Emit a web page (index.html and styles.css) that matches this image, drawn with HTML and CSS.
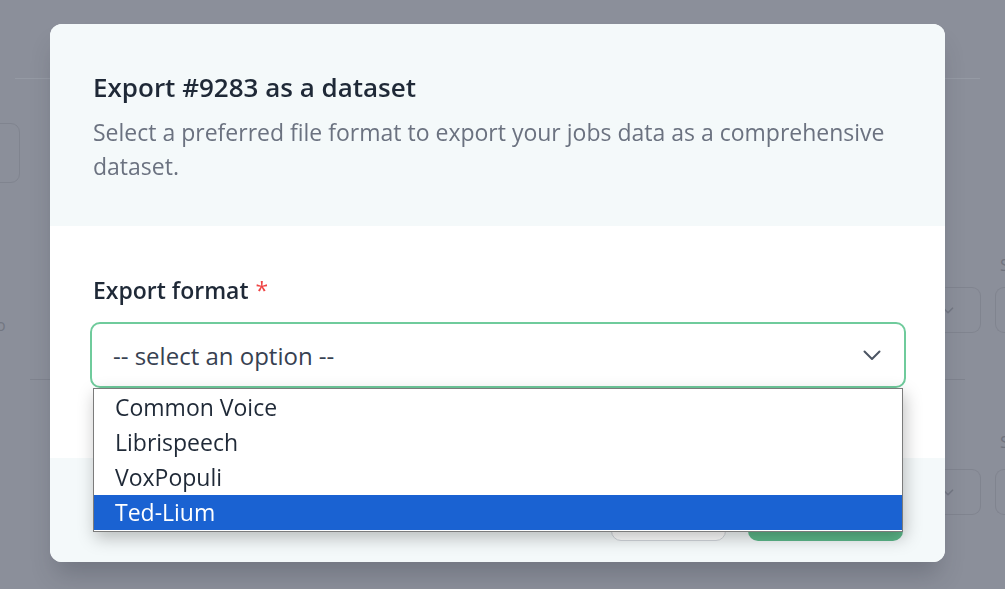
FILE: index.html
```html
<!DOCTYPE html>
<html lang="en">
<head>
<meta charset="utf-8">
<title>Export dataset</title>
<link rel="stylesheet" href="styles.css">
</head>
<body>
<div class="page">
  <div class="page-top"></div>
  <div class="page-row row-a">
    <div class="bg-box bg-box-left"></div>
  </div>
  <div class="page-row row-b">
    <span class="bg-dot">o</span>
    <div class="bg-field">
      <span class="bg-label">S</span>
      <div class="bg-controls">
        <div class="bg-select"><svg width="18" height="18" viewBox="0 0 20 20"><path d="M5 8l5 5 5-5" fill="none" stroke="#747884" stroke-width="1.8" stroke-linecap="round" stroke-linejoin="round"/></svg></div>
        <div class="bg-box bg-box-right"></div>
      </div>
    </div>
  </div>
  <div class="page-divider"></div>
  <div class="page-row row-c">
    <div class="bg-field">
      <span class="bg-label">S</span>
      <div class="bg-controls">
        <div class="bg-select"><svg width="18" height="18" viewBox="0 0 20 20"><path d="M5 8l5 5 5-5" fill="none" stroke="#747884" stroke-width="1.8" stroke-linecap="round" stroke-linejoin="round"/></svg></div>
        <div class="bg-box bg-box-right"></div>
      </div>
    </div>
  </div>
</div>

<div class="overlay">
  <div class="modal">
    <div class="modal-header">
      <h2 class="modal-title">Export #9283 as a dataset</h2>
      <p class="modal-desc">Select a preferred file format to export your jobs data as a comprehensive dataset.</p>
    </div>
    <div class="modal-body">
      <label class="field-label">Export format<span class="req">*</span></label>
      <div class="select-wrap">
        <div class="select">
          <span class="select-text">-- select an option --</span>
          <svg class="chevron" width="20" height="12" viewBox="0 0 20 12"><path d="M2.5 2.5l7.5 7.5 7.5-7.5" fill="none" stroke="#4b5563" stroke-width="2" stroke-linecap="round" stroke-linejoin="round"/></svg>
        </div>
        <ul class="dropdown">
          <li class="option">Common Voice</li>
          <li class="option">Librispeech</li>
          <li class="option">VoxPopuli</li>
          <li class="option selected">Ted-Lium</li>
        </ul>
      </div>
    </div>
    <div class="modal-footer">
      <button class="btn btn-cancel">Cancel</button>
      <button class="btn btn-primary">Export</button>
    </div>
  </div>
</div>
</body>
</html>
```
FILE: styles.css
```css
* { box-sizing: border-box; }
html, body { margin: 0; padding: 0; }
body {
  width: 1005px;
  height: 589px;
  overflow: hidden;
  background: #8b8f9a;
  font-family: "Open Sans", "Noto Sans", sans-serif;
}

/* faint page behind the overlay */
.page { width: 1005px; height: 589px; }
.page-top {
  height: 79px;
  margin: 0 25px 0 15px;
  border-bottom: 1px solid #959aa4;
}
.page-row { display: flex; }
.row-a { margin-top: 44px; }
.bg-box {
  border: 1.5px solid #80848f;
  border-radius: 9px;
}
.bg-box-left { width: 30px; height: 60px; margin-left: -10px; }
.row-b { margin-top: 72px; justify-content: space-between; align-items: flex-end; }
.row-c { margin-top: 52px; justify-content: flex-end; }
.bg-dot {
  color: #737782;
  font-size: 16px;
  line-height: 16px;
  margin-left: -4px;
}
.bg-field { display: flex; flex-direction: column; align-items: flex-end; }
.bg-label {
  color: #70747f;
  font-size: 17px;
  line-height: 20px;
  margin-right: -3px;
  width: 8px;
  overflow: hidden;
}
.bg-controls { display: flex; gap: 14px; margin-top: 12px; }
.bg-select {
  width: 52px;
  height: 46px;
  border: 1.5px solid #80848f;
  border-left: none;
  border-radius: 0 9px 9px 0;
  display: flex;
  align-items: center;
  padding-left: 10px;
}
.bg-box-right { width: 10px; height: 46px; border-right: none; border-radius: 9px 0 0 9px; }
.page-divider {
  height: 1px;
  margin: 46px 40px 0 30px;
  background: #7f838e;
}
.row-c .bg-controls { margin-top: 17px; }

/* overlay + modal */
.overlay {
  position: fixed;
  inset: 0;
  padding: 24px 0 0 50px;
}
.modal {
  width: 895px;
  height: 538px;
  background: #fff;
  border-radius: 12px;
  display: flex;
  flex-direction: column;
  box-shadow: 0 18px 24px -6px rgba(40, 44, 55, 0.25);
}
.modal-header {
  background: #f4f9fa;
  border-radius: 12px 12px 0 0;
  height: 202px;
  padding: 47px 43px 0 43px;
}
.modal-title {
  margin: 0;
  font-size: 26px;
  font-weight: 600;
  line-height: 32px;
  color: #1f2937;
}
.modal-desc {
  margin: 12px 0 0 0;
  font-size: 23px;
  line-height: 34px;
  color: #6b7280;
}
.modal-body {
  height: 232px;
  padding: 50px 39px 0 40px;
}
.field-label {
  display: block;
  padding-left: 3px;
  font-size: 23px;
  font-weight: 600;
  line-height: 28px;
  color: #1f2937;
}
.req { color: #ef4444; font-weight: 400; margin-left: 7px; }
.select-wrap { position: relative; margin-top: 18px; }
.select {
  height: 66px;
  border: 2px solid #6fcb9c;
  border-radius: 10px;
  display: flex;
  align-items: center;
  justify-content: space-between;
  padding: 0 22px 0 21px;
  background: #fff;
}
.select-text { font-size: 24px; color: #374151; }
.chevron { display: block; }
.dropdown {
  position: absolute;
  top: 100%;
  left: 3px;
  right: 3px;
  margin: 0;
  padding: 1px 0;
  list-style: none;
  background: #fff;
  border: 1px solid #7b7b7b;
  box-shadow: 2px 6px 16px rgba(0, 0, 0, 0.25);
  z-index: 5;
}
.option {
  height: 35px;
  padding-left: 21px;
  font-size: 23px;
  line-height: 35px;
  color: #1f2937;
}
.option.selected { background: #1a62d2; color: #fff; }

.modal-footer {
  flex: 1;
  background: #f4f9fa;
  border-radius: 0 0 12px 12px;
  display: flex;
  justify-content: flex-end;
  align-items: flex-end;
  gap: 22px;
  padding: 0 42px 21px 0;
}
.btn {
  height: 52px;
  border-radius: 10px;
  font-family: inherit;
  font-size: 18px;
  font-weight: 600;
}
.btn-cancel {
  width: 115px;
  background: #fff;
  border: 1.5px solid #d1d5db;
  color: #374151;
}
.btn-primary {
  width: 155px;
  background: #5cb88a;
  border: none;
  color: #fff;
}
```
